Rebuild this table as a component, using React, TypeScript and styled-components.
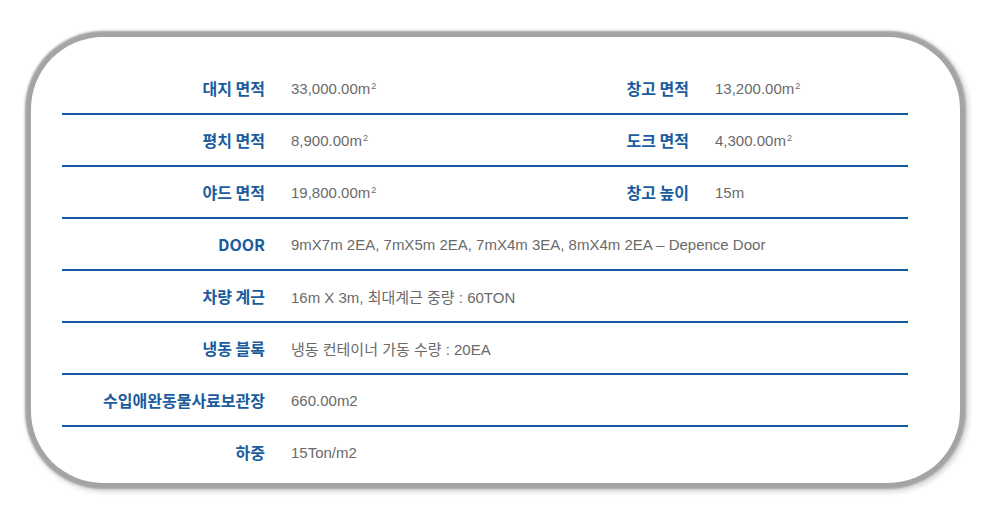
import { createGlobalStyle, styled } from "styled-components";

const GlobalStyle = createGlobalStyle`
  html, body {
    margin: 0;
    padding: 0;
    background: #ffffff;
  }
  body {
    font-family: "Liberation Sans", "Noto Sans CJK KR", sans-serif;
  }
`;

const Page = styled.div`
  padding: 37px 0 38px 31px;
`;

const Card = styled.div`
  width: 929px;
  height: 446px;
  box-sizing: border-box;
  padding: 26px 52px 0 31px;
  background: #ffffff;
  border-radius: 72px;
  box-shadow: 0 0 2px 6px #a4a4a4, 2px 2px 5px 7px rgba(0, 0, 0, 0.15);
`;

const Row = styled.div<{ $last?: boolean }>`
  display: grid;
  grid-template-columns: 203px 252px 120px 1fr;
  column-gap: 26px;
  align-items: center;
  height: 50px;
  border-bottom: ${(p) => (p.$last ? "none" : "2px solid #1259a0")};
`;

const Label = styled.div`
  text-align: right;
  font-family: "Noto Sans CJK KR", "Liberation Sans", sans-serif;
  font-weight: 700;
  font-size: 16px;
  color: #1a5c9e;
  white-space: nowrap;
`;

const Value = styled.div<{ $wide?: boolean }>`
  grid-column: ${(p) => (p.$wide ? "2 / 5" : "auto")};
  font-family: "Liberation Sans", "Noto Sans CJK KR", sans-serif;
  font-size: 15px;
  color: #6a6a6a;
  white-space: nowrap;

  sup {
    font-size: 9px;
    vertical-align: 5px;
    line-height: 0;
    margin-left: 1px;
  }
`;

const Sq = ({ v }: { v: string }) => (
  <>
    {v}m<sup>2</sup>
  </>
);

export default function App() {
  return (
    <>
      <GlobalStyle />
      <Page>
        <Card>
          <Row>
            <Label>대지 면적</Label>
            <Value><Sq v="33,000.00" /></Value>
            <Label>창고 면적</Label>
            <Value><Sq v="13,200.00" /></Value>
          </Row>
          <Row>
            <Label>평치 면적</Label>
            <Value><Sq v="8,900.00" /></Value>
            <Label>도크 면적</Label>
            <Value><Sq v="4,300.00" /></Value>
          </Row>
          <Row>
            <Label>야드 면적</Label>
            <Value><Sq v="19,800.00" /></Value>
            <Label>창고 높이</Label>
            <Value>15m</Value>
          </Row>
          <Row>
            <Label>DOOR</Label>
            <Value $wide>
              9mX7m 2EA, 7mX5m 2EA, 7mX4m 3EA, 8mX4m 2EA – Depence Door
            </Value>
          </Row>
          <Row>
            <Label>차량 계근</Label>
            <Value $wide>16m X 3m, 최대계근 중량 : 60TON</Value>
          </Row>
          <Row>
            <Label>냉동 블록</Label>
            <Value $wide>냉동 컨테이너 가동 수량 : 20EA</Value>
          </Row>
          <Row>
            <Label>수입애완동물사료보관장</Label>
            <Value $wide>660.00m2</Value>
          </Row>
          <Row $last>
            <Label>하중</Label>
            <Value $wide>15Ton/m2</Value>
          </Row>
        </Card>
      </Page>
    </>
  );
}
